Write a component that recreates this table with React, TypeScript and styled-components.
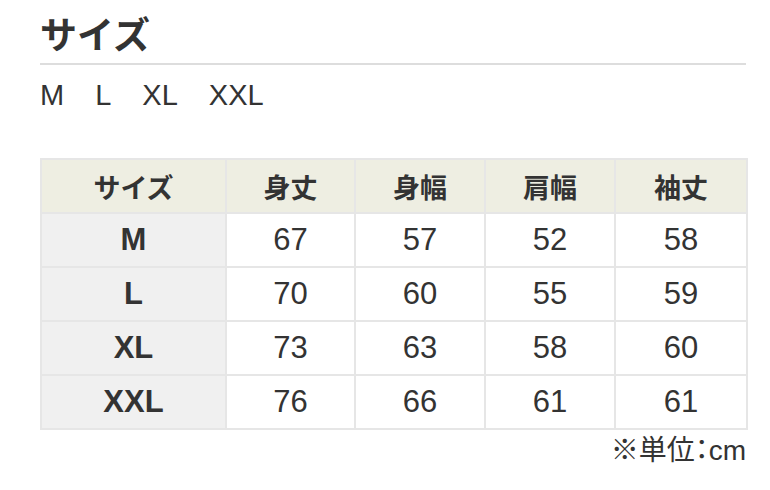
import React from 'react';
import styled, { createGlobalStyle } from 'styled-components';

const GlobalStyle = createGlobalStyle`
  body {
    margin: 0;
    background: #ffffff;
    font-family: 'Liberation Sans', 'Noto Sans CJK JP', sans-serif;
    color: #333333;
  }
`;

const Page = styled.div`
  width: 706px;
  padding: 8px 24px 0 40px;
`;

const Title = styled.h2`
  margin: 0;
  font-family: 'Noto Sans CJK JP', sans-serif;
  font-size: 37px;
  font-weight: 700;
  line-height: 50px;
  color: #333;
  padding-bottom: 5px;
  border-bottom: 2px solid #dddddd;
`;

const SizeList = styled.div`
  display: flex;
  gap: 31px;
  margin-top: 12px;
  font-size: 29px;
  line-height: 36px;
  color: #333;
`;

const Table = styled.table`
  margin-top: 45px;
  width: 706px;
  border-collapse: collapse;
  table-layout: fixed;
  border: 2px solid #e6e6e6;
`;

const HeadCell = styled.th`
  height: 52px;
  padding: 0;
  background: #eeeee2;
  border: 2px solid #e6e6e6;
  font-family: 'Noto Sans CJK JP', sans-serif;
  font-size: 27px;
  font-weight: 700;
  color: #333;
  text-align: center;
`;

const RowHead = styled.th`
  height: 52px;
  padding: 0;
  background: #f0f0f0;
  border: 2px solid #e6e6e6;
  font-size: 31px;
  font-weight: 700;
  color: #333;
  text-align: center;
`;

const Cell = styled.td`
  height: 52px;
  padding: 0;
  background: #ffffff;
  border: 2px solid #e6e6e6;
  font-size: 31px;
  font-weight: 400;
  color: #333;
  text-align: center;
`;

const Note = styled.div`
  margin-top: 3px;
  text-align: right;
  font-size: 28px;
  line-height: 36px;
  color: #333;
  font-feature-settings: 'palt';
`;

const columns = ['サイズ', '身丈', '身幅', '肩幅', '袖丈'];
const widths = [185, 129, 130, 130, 132];

const rows = [
  { size: 'M', values: [67, 57, 52, 58] },
  { size: 'L', values: [70, 60, 55, 59] },
  { size: 'XL', values: [73, 63, 58, 60] },
  { size: 'XXL', values: [76, 66, 61, 61] },
];

export default function App() {
  return (
    <Page>
      <GlobalStyle />
      <Title>サイズ</Title>
      <SizeList>
        {rows.map((r) => (
          <span key={r.size}>{r.size}</span>
        ))}
      </SizeList>
      <Table>
        <colgroup>
          {widths.map((w, i) => (
            <col key={i} style={{ width: w }} />
          ))}
        </colgroup>
        <thead>
          <tr>
            {columns.map((c) => (
              <HeadCell key={c}>{c}</HeadCell>
            ))}
          </tr>
        </thead>
        <tbody>
          {rows.map((r) => (
            <tr key={r.size}>
              <RowHead>{r.size}</RowHead>
              {r.values.map((v, i) => (
                <Cell key={i}>{v}</Cell>
              ))}
            </tr>
          ))}
        </tbody>
      </Table>
      <Note>※単位：cm</Note>
    </Page>
  );
}
